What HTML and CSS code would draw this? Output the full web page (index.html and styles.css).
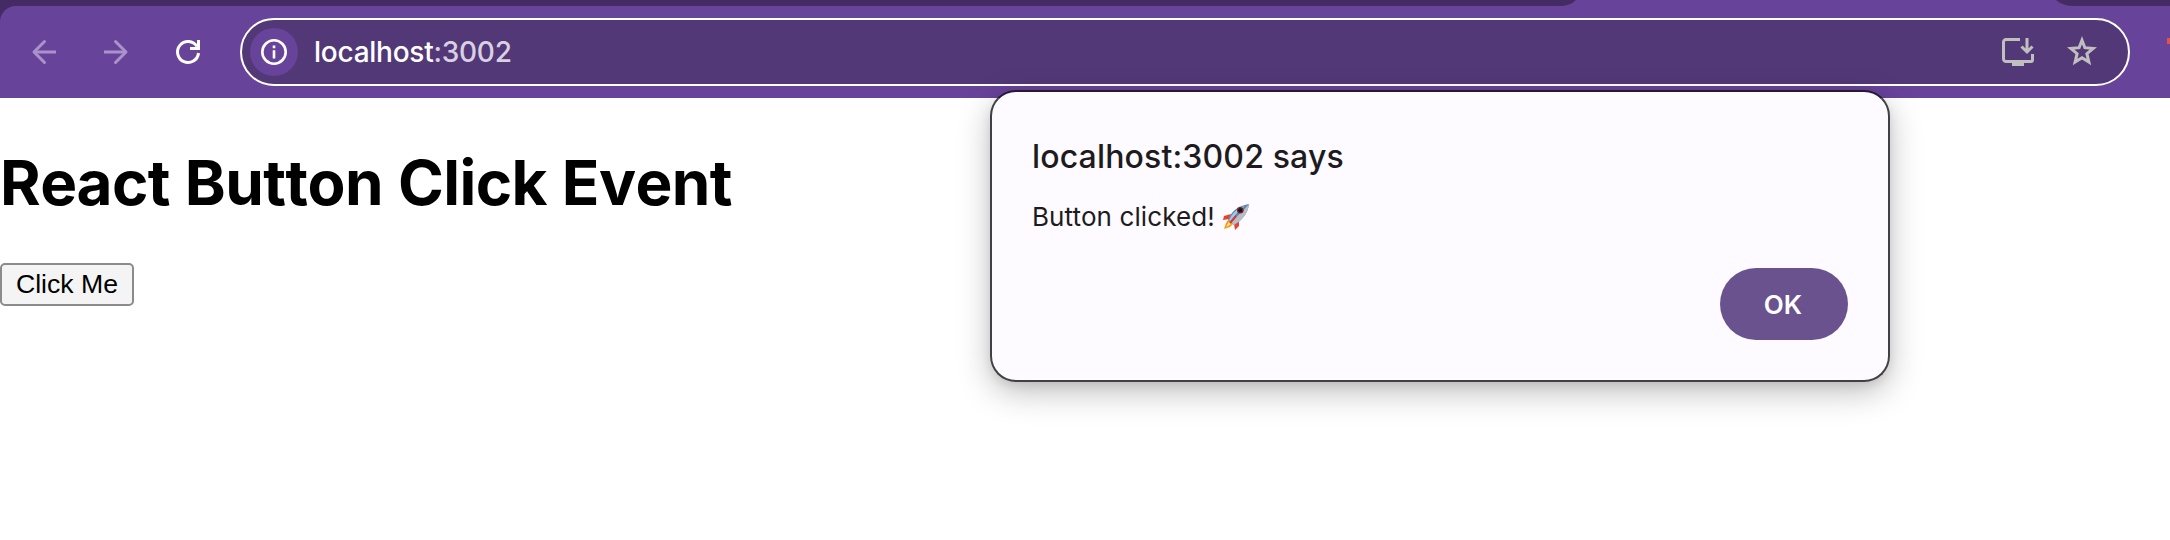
FILE: index.html
```html
<!DOCTYPE html>
<html lang="en">
<head>
<meta charset="utf-8">
<title>React Button Click Event</title>
<link rel="stylesheet" href="styles.css">
</head>
<body>
<header class="browser">
  <div class="tab-strip"><div class="tabs-left"></div><div class="tabs-right"></div></div>
  <div class="toolbar">
    <nav class="nav">
      <svg class="icon faded" viewBox="0 0 32 32"><path d="M28 16H6"/><path class="head" d="M16.500 5.500L6 16l10.500 10.500"/></svg>
      <svg class="icon faded" viewBox="0 0 32 32"><path d="M4 16h22"/><path class="head" d="M15.500 5.500L26 16 15.500 26.500"/></svg>
      <svg class="icon reload" viewBox="0 0 32 32"><path d="M26.500 17A10.500 10.500 0 1 1 25 10.500"/><path class="solid" d="M25 4h3v10H18v-3h7z"/></svg>
    </nav>
    <div class="omnibox">
      <span class="site-info"><svg class="info-icon" viewBox="0 0 26 26"><circle cx="13" cy="13" r="11.700"/><path class="solid" d="M11.700 6.500h2.600v2.700h-2.600zM11.700 11.300h2.600v8.300h-2.600z"/></svg></span>
      <span class="url">localhost<span class="port">:3002</span></span>
      <span class="actions">
        <svg class="install-icon" viewBox="0 0 32 28"><path d="M18 1.500H4A2.500 2.500 0 0 0 1.500 4v17A2.500 2.500 0 0 0 4 23.500h25A1.500 1.500 0 0 0 30.500 22v-6M25 0v14M19.500 8.500L25 14l5.500-5.500"/><path class="solid" d="M10 23h12v5H10z"/></svg>
        <svg class="star-icon" viewBox="0 0 30 30"><path d="M15 4.200l2.900 7.500 8.400.7-6.400 5.300 2 8.400-6.900-4.400-6.900 4.400 2-8.400-6.400-5.300 8.400-.7z"/></svg>
      </span>
    </div>
    <i class="extension"></i>
  </div>
</header>
<main class="page">
  <h1 class="heading">React Button Click Event</h1>
  <button class="click-me">Click Me</button>
</main>
<section class="dialog" role="alertdialog">
  <h2 class="dialog-title">localhost:3002 says</h2>
  <p class="dialog-message"><span>Button clicked!</span>
    <svg class="rocket" viewBox="0 0 26 26" role="img" aria-label="rocket">
      <path d="M8 10L1 12l-1 4 6-1zM16 17l0 5-4 4-1-6z" fill="#e9412b"/>
      <path d="M5 16l-2 3-2 6 6-2 4-4z" fill="#f79a24"/><path d="M6 18l-3 5 5-3z" fill="#fff27a"/>
      <path d="M5 16C8 8 14 2 26 0c-1 10-8 17-15 21z" fill="#5f84ad"/>
      <path d="M8 18C14 12 20 7 26 0c-1 10-8 17-15 21z" fill="#b9bec6"/>
      <path d="M6 16c4-8 9-12 16-14-7 5-11 10-14 16z" fill="#9fc9ec"/>
      <circle cx="17.300" cy="6.200" r="3.300" fill="#7e2325"/><circle cx="17.300" cy="6.200" r="2" fill="#15171d"/>
      <path d="M13 12l-6 7" stroke="#d13a2b" stroke-width="2"/>
    </svg>
  </p>
  <button class="ok">OK</button>
</section>
</body>
</html>
```
FILE: styles.css
```css
* { box-sizing: border-box; }
body { margin: 0; height: 540px; overflow: hidden; position: relative; background: #fff; font-family: Inter, "Liberation Sans", sans-serif; }
svg { display: block; flex: none; fill: none; stroke-width: 3; }
.browser { background: #68439a; height: 98px; }
.tab-strip { height: 6px; display: flex; justify-content: space-between; }
.tabs-left { width: 1580px; background: #442b63; clip-path: path("M0 0H1576Q1570 6 1560 6H0Z"); }
.tabs-right { width: 114px; background: #442b63; clip-path: path("M0 0H114V6H18Q7 6 0 0Z"); }
.toolbar { height: 92px; padding: 12px 0 12px 28px; display: flex; background: radial-gradient(circle at 16px 16px, transparent 15.5px, #442b63 16.500px) 0 0 / 16px 16px no-repeat; }
.nav { display: flex; align-items: center; gap: 40px; width: 212px; flex: none; }
.icon { width: 32px; height: 32px; stroke: #fff; }
.faded { stroke: #aa93cb; }
.head { stroke-linecap: round; stroke-linejoin: round; }
.solid { fill: #fff; stroke: none; }
.omnibox { width: 1890px; height: 68px; flex: none; border: 2px solid #fff; border-radius: 34px; background: #523877; display: flex; align-items: center; padding: 0 31px 0 8px; }
.site-info { width: 48px; height: 48px; border-radius: 50%; background: #68439a; display: flex; align-items: center; justify-content: center; }
.info-icon { width: 26px; height: 26px; stroke: #fff; stroke-width: 2.6; }
.url { margin-left: 16px; font-size: 28px; line-height: 34px; font-weight: 450; letter-spacing: -0.25px; color: #fff; white-space: nowrap; }
.port { color: #d9d0e3; }
.actions { margin-left: auto; display: flex; align-items: center; gap: 33px; stroke: #c0bfc0; }
.actions .solid { fill: #c0bfc0; }
.install-icon { width: 32px; height: 28px; }
.star-icon { width: 30px; height: 30px; stroke-width: 3; margin-top: -2px; }
.extension { width: 3px; height: 6px; margin: 20px 0 0 37px; background: #e45145; }
.page { padding-top: 47px; display: flex; flex-direction: column; align-items: flex-start; }
.heading { margin: 0; font-size: 62px; line-height: 76px; font-weight: 700; letter-spacing: -0.58px; word-spacing: .8px; font-kerning: none; color: #000; white-space: nowrap; }
.click-me { margin-top: 42px; width: 134px; height: 43px; padding: 0 0 2px; border: 2px solid #8b8b8b; border-radius: 5px; background: #f4f4f4; color: #000; font: 26.667px/34px "Liberation Sans", sans-serif; letter-spacing: 0; }
.dialog { position: absolute; left: 990px; top: 90px; width: 900px; height: 292px; padding: 45px 40px 40px; border: 2px solid #414044; border-top-color: #251934; border-radius: 26px; background: #fdfbff; color: #1d1b20; box-shadow: 0 10px 32px rgba(0,0,0,.25), 0 4px 10px rgba(0,0,0,.08); display: flex; flex-direction: column; }
.dialog-title { margin: 0; font-size: 32px; line-height: 40px; font-weight: 500; letter-spacing: .15px; white-space: nowrap; }
.dialog-message { margin: 23px 0 0; height: 34px; display: flex; align-items: center; gap: 8px; font-size: 26px; line-height: 34px; letter-spacing: .1px; white-space: nowrap; }
.rocket { width: 26px; height: 26px; }
.ok { align-self: flex-end; margin-top: auto; width: 128px; height: 72px; padding: 1px 2px 0 0; border: 0; border-radius: 36px; background: #6a528f; color: #fff; font: 600 26px/32px Inter, sans-serif; }
```
